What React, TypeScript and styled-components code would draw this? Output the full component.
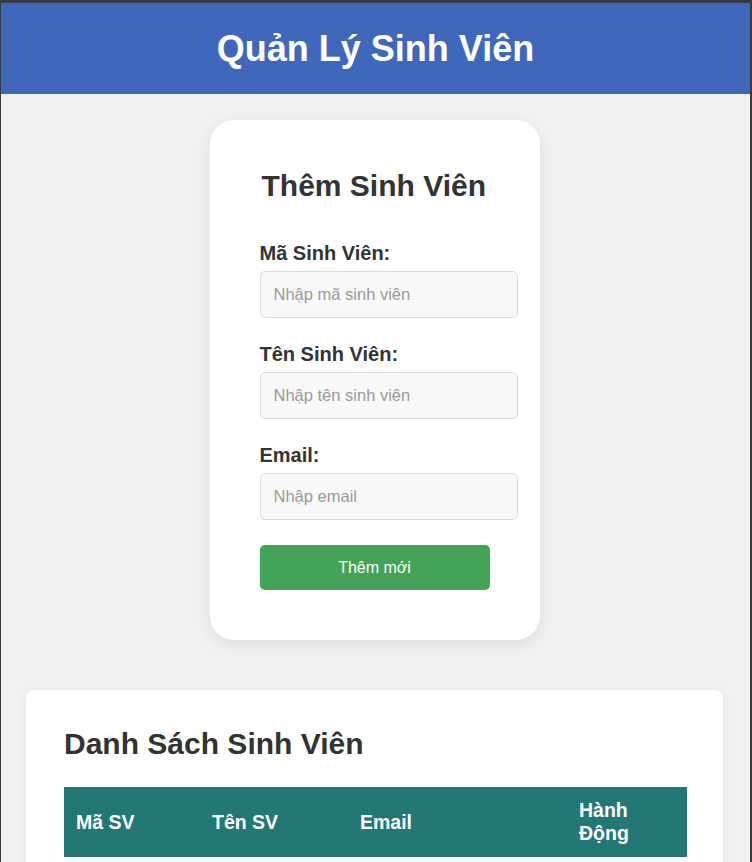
import styled, { createGlobalStyle } from 'styled-components';

const GlobalStyle = createGlobalStyle`
  html, body {
    margin: 0;
    padding: 0;
    background: #f1f1f1;
  }
  * {
    box-sizing: border-box;
  }
  body {
    font-family: 'Liberation Sans', Arial, sans-serif;
    color: #333;
  }
`;

const Frame = styled.div`
  min-height: 862px;
  border-top: 3px solid #373c42;
  border-left: 1px solid #373c42;
  border-right: 2px solid #373c42;
  background: #f1f1f1;
`;

const Header = styled.header`
  height: 91px;
  background: #3f68bc;
  display: flex;
  align-items: center;
  justify-content: center;

  h1 {
    margin: 0;
    color: #ffffff;
    font-size: 36px;
    font-weight: 700;
  }
`;

const Main = styled.main`
  padding: 26px 27px 0 25px;
  display: flex;
  flex-direction: column;
  align-items: center;
  gap: 50px;
`;

const FormCard = styled.section`
  width: 330px;
  padding: 50px;
  background: #ffffff;
  border-radius: 24px;
  box-shadow: 0 4px 14px rgba(0, 0, 0, 0.09);

  h2 {
    margin: 0 0 40px 2px;
    font-size: 30px;
    line-height: 32px;
    font-weight: 700;
    color: #333;
  }
`;

const Field = styled.div`
  margin-bottom: 25px;
`;

const Label = styled.label`
  display: block;
  font-size: 20px;
  line-height: 22px;
  font-weight: 700;
  margin-bottom: 7px;
`;

const Input = styled.input`
  box-sizing: content-box;
  width: 100%;
  height: 21px;
  padding: 12px 13px;
  background: #f8f8f8;
  border: 1px solid #dcdcdc;
  border-radius: 5px;
  font-family: 'Liberation Sans', Arial, sans-serif;
  font-size: 16.5px;
  color: #333;
  outline: none;

  &::placeholder {
    color: #9a9a9a;
  }
`;

const SubmitButton = styled.button`
  width: 230px;
  height: 45px;
  border: none;
  border-radius: 5px;
  background: #43a356;
  color: #ffffff;
  font-family: 'Liberation Sans', Arial, sans-serif;
  font-size: 16px;
  cursor: pointer;
`;

const ListCard = styled.section`
  align-self: stretch;
  padding: 36px 36px 40px 38px;
  background: #ffffff;
  border-radius: 8px 8px 0 0;
  box-shadow: 0 2px 10px rgba(0, 0, 0, 0.06);

  h2 {
    margin: 0 0 25px;
    font-size: 30px;
    line-height: 36px;
    font-weight: 700;
    color: #333;
  }
`;

const Table = styled.table`
  width: 100%;
  border-collapse: collapse;
`;

const HeadCell = styled.th<{ w: number }>`
  width: ${p => p.w}px;
  padding: 12px;
  background: #237774;
  color: #ffffff;
  text-align: left;
  font-size: 19.5px;
  line-height: 23px;
  font-weight: 700;
`;

const columns = [
  { label: 'Mã SV', w: 136 },
  { label: 'Tên SV', w: 148 },
  { label: 'Email', w: 219 },
  { label: 'Hành Động', w: 120 },
];

const fields = [
  { label: 'Mã Sinh Viên:', placeholder: 'Nhập mã sinh viên' },
  { label: 'Tên Sinh Viên:', placeholder: 'Nhập tên sinh viên' },
  { label: 'Email:', placeholder: 'Nhập email' },
];

const App = () => {
  return (
    <>
      <GlobalStyle />
      <Frame>
        <Header>
          <h1>Quản Lý Sinh Viên</h1>
        </Header>
        <Main>
          <FormCard>
            <h2>Thêm Sinh Viên</h2>
            {fields.map(f => (
              <Field key={f.label}>
                <Label>{f.label}</Label>
                <Input placeholder={f.placeholder} />
              </Field>
            ))}
            <SubmitButton>Thêm mới</SubmitButton>
          </FormCard>
          <ListCard>
            <h2>Danh Sách Sinh Viên</h2>
            <Table>
              <thead>
                <tr>
                  {columns.map(c => (
                    <HeadCell key={c.label} w={c.w}>
                      {c.label}
                    </HeadCell>
                  ))}
                </tr>
              </thead>
            </Table>
          </ListCard>
        </Main>
      </Frame>
    </>
  );
};

export default App;
